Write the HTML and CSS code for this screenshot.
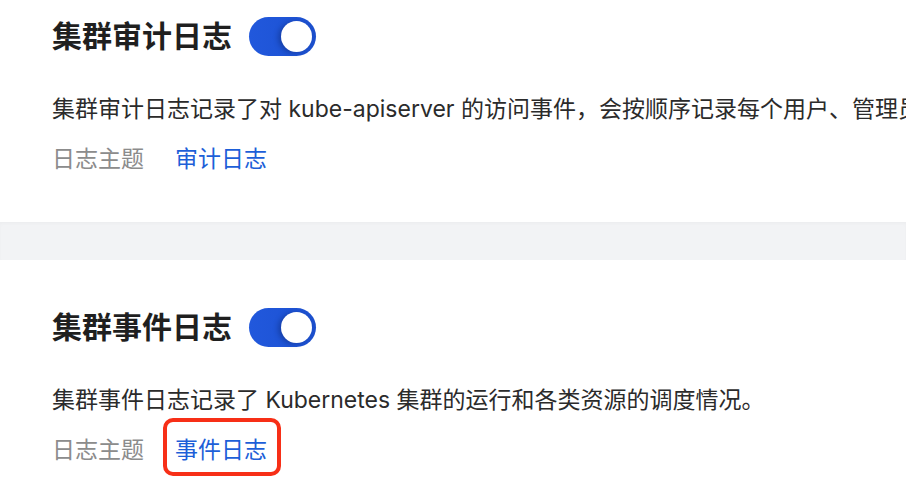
FILE: index.html
```html
<!DOCTYPE html>
<html lang="zh-CN">
<head>
  <meta charset="UTF-8" />
  <title>日志采集</title>
  <link rel="stylesheet" href="styles.css">
</head>
<body>
  <div class="page">
    <section class="log-card">
      <div class="log-head">
        <h2>集群审计日志</h2>
        <span class="switch is-on"><span class="knob"></span></span>
      </div>
      <p class="log-desc">集群审计日志记录了对 kube-apiserver 的访问事件，会按顺序记录每个用户、管理员或系统组件影响集群的活动。</p>
      <div class="log-meta">
        <span class="meta-label">日志主题</span>
        <a class="meta-value" href="#">审计日志</a>
      </div>
    </section>

    <div class="divider"></div>

    <section class="log-card">
      <div class="log-head">
        <h2>集群事件日志</h2>
        <span class="switch is-on"><span class="knob"></span></span>
      </div>
      <p class="log-desc">集群事件日志记录了 Kubernetes 集群的运行和各类资源的调度情况。</p>
      <div class="log-meta">
        <span class="meta-label">日志主题</span>
        <a class="meta-value marked" href="#">事件日志</a>
      </div>
    </section>
  </div>
</body>
</html>
```

FILE: styles.css
```css
:root {
  --text: #1f1f1f;
  --desc: #2b2b2b;
  --muted: #8c8c8c;
  --link: #1d5fd8;
  --switch: #1f57d9;
  --band: #f2f3f5;
  --mark: #f72f17;
}

html, body {
  margin: 0;
  padding: 0;
  background: #fff;
  overflow: hidden;
}

body {
  font-family: Inter, "Noto Sans CJK SC", sans-serif;
  color: var(--text);
}

/* page is scrolled a bit, top of first card is cut off */
.page {
  margin-top: -31px;
}

.log-card {
  padding: 48px 0 47px 52px;
  background: #fff;
}

.log-head {
  display: flex;
  align-items: center;
  gap: 17px;
  height: 39px;
}

.log-head h2 {
  margin: 0;
  font-size: 30px;
  font-weight: 700;
  line-height: 39px;
  color: var(--text);
}

.switch {
  display: flex;
  align-items: center;
  justify-content: flex-end;
  width: 67px;
  height: 39px;
  box-sizing: border-box;
  padding: 4px;
  border-radius: 20px;
  background: #c9ccd3;
}

.switch.is-on {
  background: linear-gradient(90deg, #2158dc 0%, #1e54d6 60%, #1c4fcc 100%);
}

.knob {
  width: 31px;
  height: 31px;
  border-radius: 50%;
  background: #fff;
  box-shadow: -3px 1px 5px rgba(10, 30, 90, 0.35);
}

.log-desc {
  margin: 37px 0 0;
  font-size: 23px;
  line-height: 32px;
  color: var(--desc);
  white-space: nowrap;
}

.log-meta {
  display: flex;
  align-items: center;
  margin-top: 18px;
  font-size: 23px;
  line-height: 32px;
}

.meta-label {
  color: var(--muted);
  margin-right: 31px;
}

.meta-value {
  color: var(--link);
  text-decoration: none;
}

.meta-value.marked {
  position: relative;
}

/* red annotation frame drawn over the link */
.meta-value.marked::after {
  content: "";
  position: absolute;
  left: -12px;
  right: -14px;
  top: -16px;
  bottom: -10px;
  border: 4px solid var(--mark);
  border-radius: 10px;
}

.divider {
  height: 38px;
  background: var(--band);
  box-shadow: inset 0 2px 3px rgba(0, 0, 0, 0.025);
}
```
